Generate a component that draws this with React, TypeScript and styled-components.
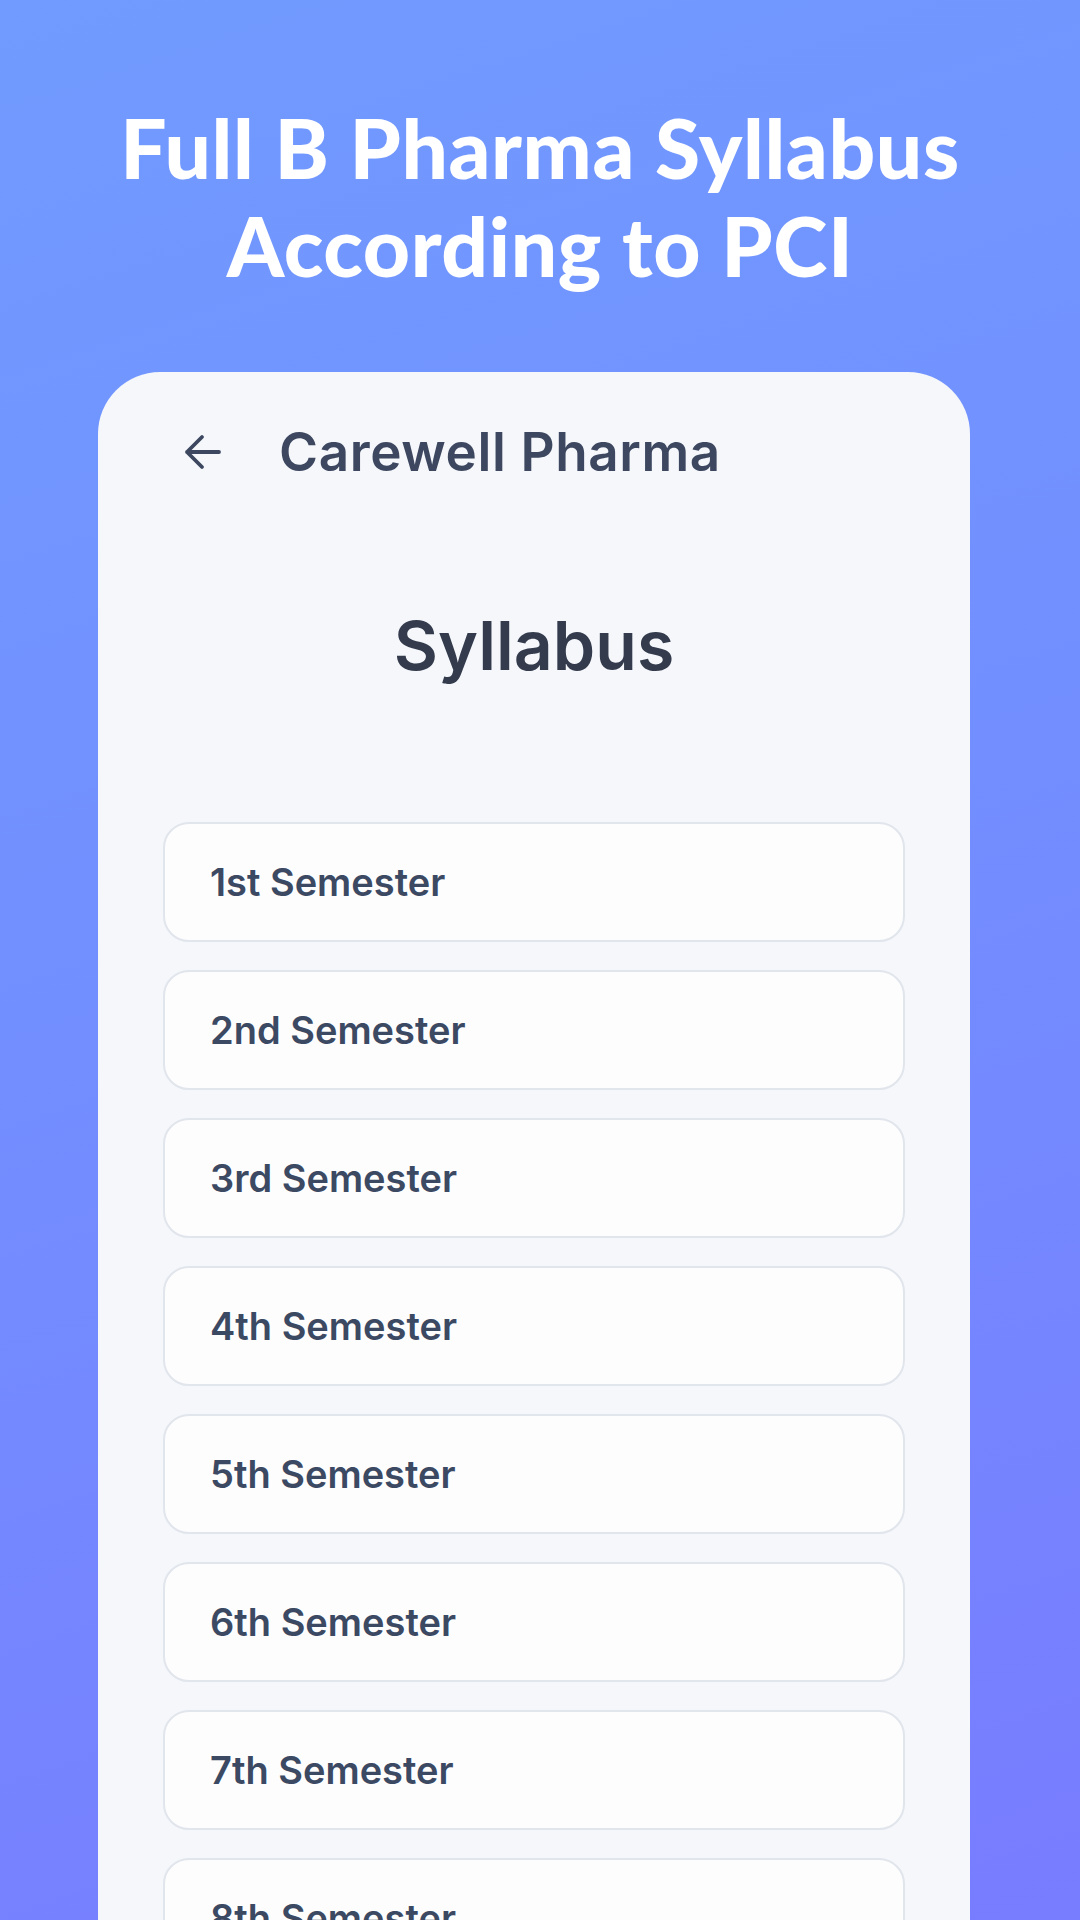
import React from "react";
import styled, { createGlobalStyle } from "styled-components";

const GlobalStyle = createGlobalStyle`
  html, body { margin: 0; padding: 0; }
  body { width: 1080px; height: 1920px; overflow: hidden; }
  * { box-sizing: border-box; }
`;

const Page = styled.div`
  width: 1080px;
  height: 1920px;
  overflow: hidden;
  background: linear-gradient(162deg, #719bff 0%, #728fff 45%, #787cff 100%);
  display: flex;
  flex-direction: column;
`;

const Headline = styled.h1`
  margin: 0;
  padding-top: 98px;
  text-align: center;
  color: #ffffff;
  font-family: "Lato", "Liberation Sans", sans-serif;
  font-weight: 900;
  font-size: 82px;
  line-height: 98px;
  letter-spacing: 0.6px;
`;

const Card = styled.section`
  margin-top: 78px;
  margin-left: 98px;
  width: 872px;
  flex: 1;
  background: #f5f7fb;
  border-radius: 62px 62px 0 0;
  display: flex;
  flex-direction: column;
  padding: 0 65px;
`;

const TopBar = styled.header`
  display: flex;
  align-items: center;
  height: 160px;
  padding-left: 20px;
  gap: 58px;
`;

const BackIcon = styled.svg`
  width: 38px;
  height: 36px;
  flex: none;
`;

const AppName = styled.div`
  font-family: "Inter", "Noto Sans", sans-serif;
  font-weight: 600;
  font-size: 53px;
  letter-spacing: 0.6px;
  color: #3d4860;
`;

const PageTitle = styled.h2`
  margin: 0;
  margin-top: 72px;
  text-align: center;
  font-family: "Inter", "Noto Sans", sans-serif;
  font-weight: 600;
  font-size: 68px;
  color: #333b4c;
`;

const List = styled.div`
  margin-top: 136px;
  display: flex;
  flex-direction: column;
  gap: 28px;
`;

const Item = styled.div`
  height: 120px;
  background: #fdfdfe;
  border: 2px solid #e1e5ec;
  border-radius: 26px;
  display: flex;
  align-items: center;
  padding-left: 45px;
  font-family: "Inter", "Noto Sans", sans-serif;
  font-weight: 600;
  font-size: 38px;
  color: #3c4963;
  flex: none;
`;

const semesters = ["1st", "2nd", "3rd", "4th", "5th", "6th", "7th", "8th"];

export default function App() {
  return (
    <>
      <GlobalStyle />
      <Page>
        <Headline>
          Full B Pharma Syllabus
          <br />
          According to PCI
        </Headline>
        <Card>
          <TopBar>
            <BackIcon viewBox="0 0 38 36" fill="none">
              <path d="M36 18H4M19 3L4 18L19 33" stroke="#3d4860" strokeWidth="3.8" strokeLinecap="round" strokeLinejoin="round" />
            </BackIcon>
            <AppName>Carewell Pharma</AppName>
          </TopBar>
          <PageTitle>Syllabus</PageTitle>
          <List>
            {semesters.map((s) => (
              <Item key={s}>{s} Semester</Item>
            ))}
          </List>
        </Card>
      </Page>
    </>
  );
}
